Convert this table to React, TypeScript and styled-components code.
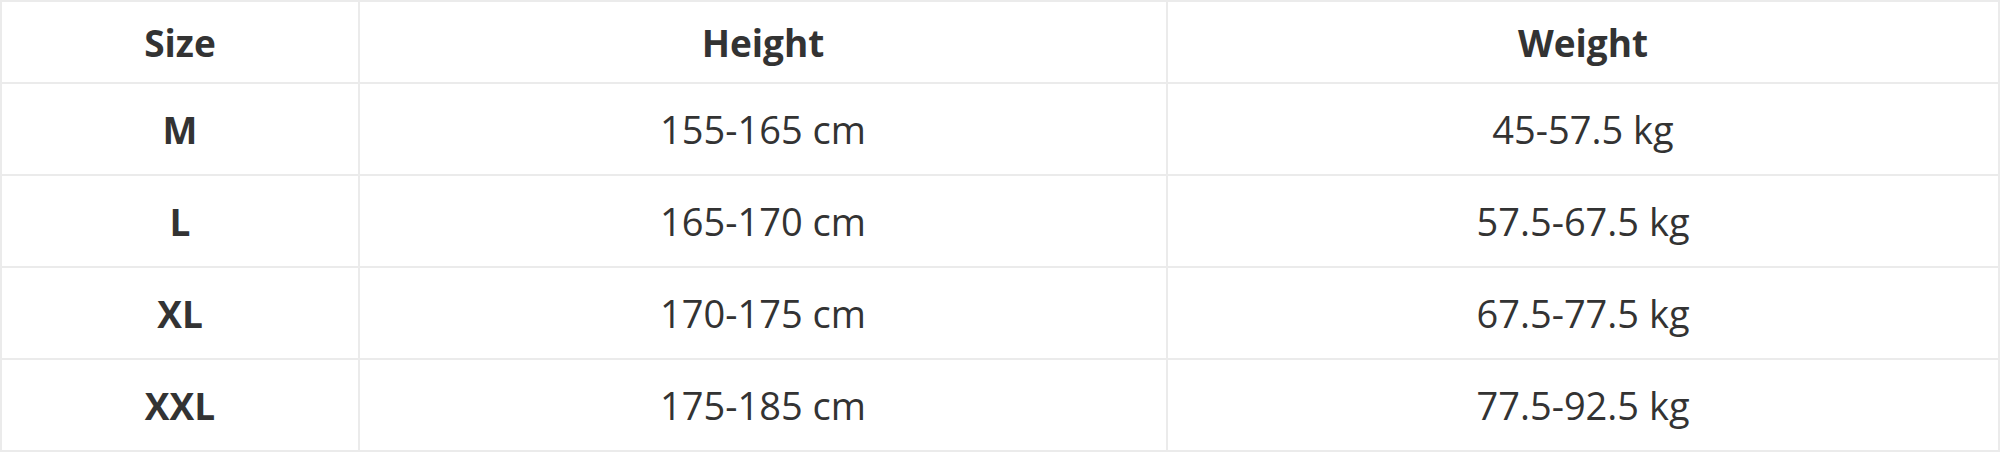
import styled, { createGlobalStyle } from 'styled-components'

const GlobalStyle = createGlobalStyle`
  html, body {
    margin: 0;
    padding: 0;
    background: #fff;
  }
  body {
    font-family: "Open Sans", "Noto Sans", sans-serif;
    color: #333;
  }
`

const Table = styled.table`
  width: 2000px;
  table-layout: fixed;
  border-collapse: separate;
  border-spacing: 0;
  border-top: 2px solid #ebebeb;
  border-left: 2px solid #ebebeb;
  box-sizing: border-box;
`

const Col = styled.col<{ $width: number }>`
  width: ${props => props.$width}px;
`

const HeadCell = styled.th`
  box-sizing: border-box;
  height: 82px;
  padding: 0;
  border-right: 2px solid #ebebeb;
  border-bottom: 2px solid #ebebeb;
  font-size: 37px;
  font-weight: 700;
  text-align: center;
  vertical-align: middle;
  color: #333;
`

const Cell = styled.td<{ $bold?: boolean }>`
  box-sizing: border-box;
  height: 92px;
  padding: 0;
  border-right: 2px solid #ebebeb;
  border-bottom: 2px solid #ebebeb;
  font-size: ${props => (props.$bold ? 37 : 38)}px;
  font-weight: ${props => (props.$bold ? 700 : 400)};
  text-align: center;
  vertical-align: middle;
  color: #333;
`

const rows = [
  { size: 'M', height: '155-165 cm', weight: '45-57.5 kg' },
  { size: 'L', height: '165-170 cm', weight: '57.5-67.5 kg' },
  { size: 'XL', height: '170-175 cm', weight: '67.5-77.5 kg' },
  { size: 'XXL', height: '175-185 cm', weight: '77.5-92.5 kg' },
]

function App() {
  return (
    <>
      <GlobalStyle />
      <Table>
        <colgroup>
          <Col $width={358} />
          <Col $width={808} />
          <Col $width={832} />
        </colgroup>
        <thead>
          <tr>
            <HeadCell>Size</HeadCell>
            <HeadCell>Height</HeadCell>
            <HeadCell>Weight</HeadCell>
          </tr>
        </thead>
        <tbody>
          {rows.map(row => (
            <tr key={row.size}>
              <Cell $bold>{row.size}</Cell>
              <Cell>{row.height}</Cell>
              <Cell>{row.weight}</Cell>
            </tr>
          ))}
        </tbody>
      </Table>
    </>
  )
}

export default App
